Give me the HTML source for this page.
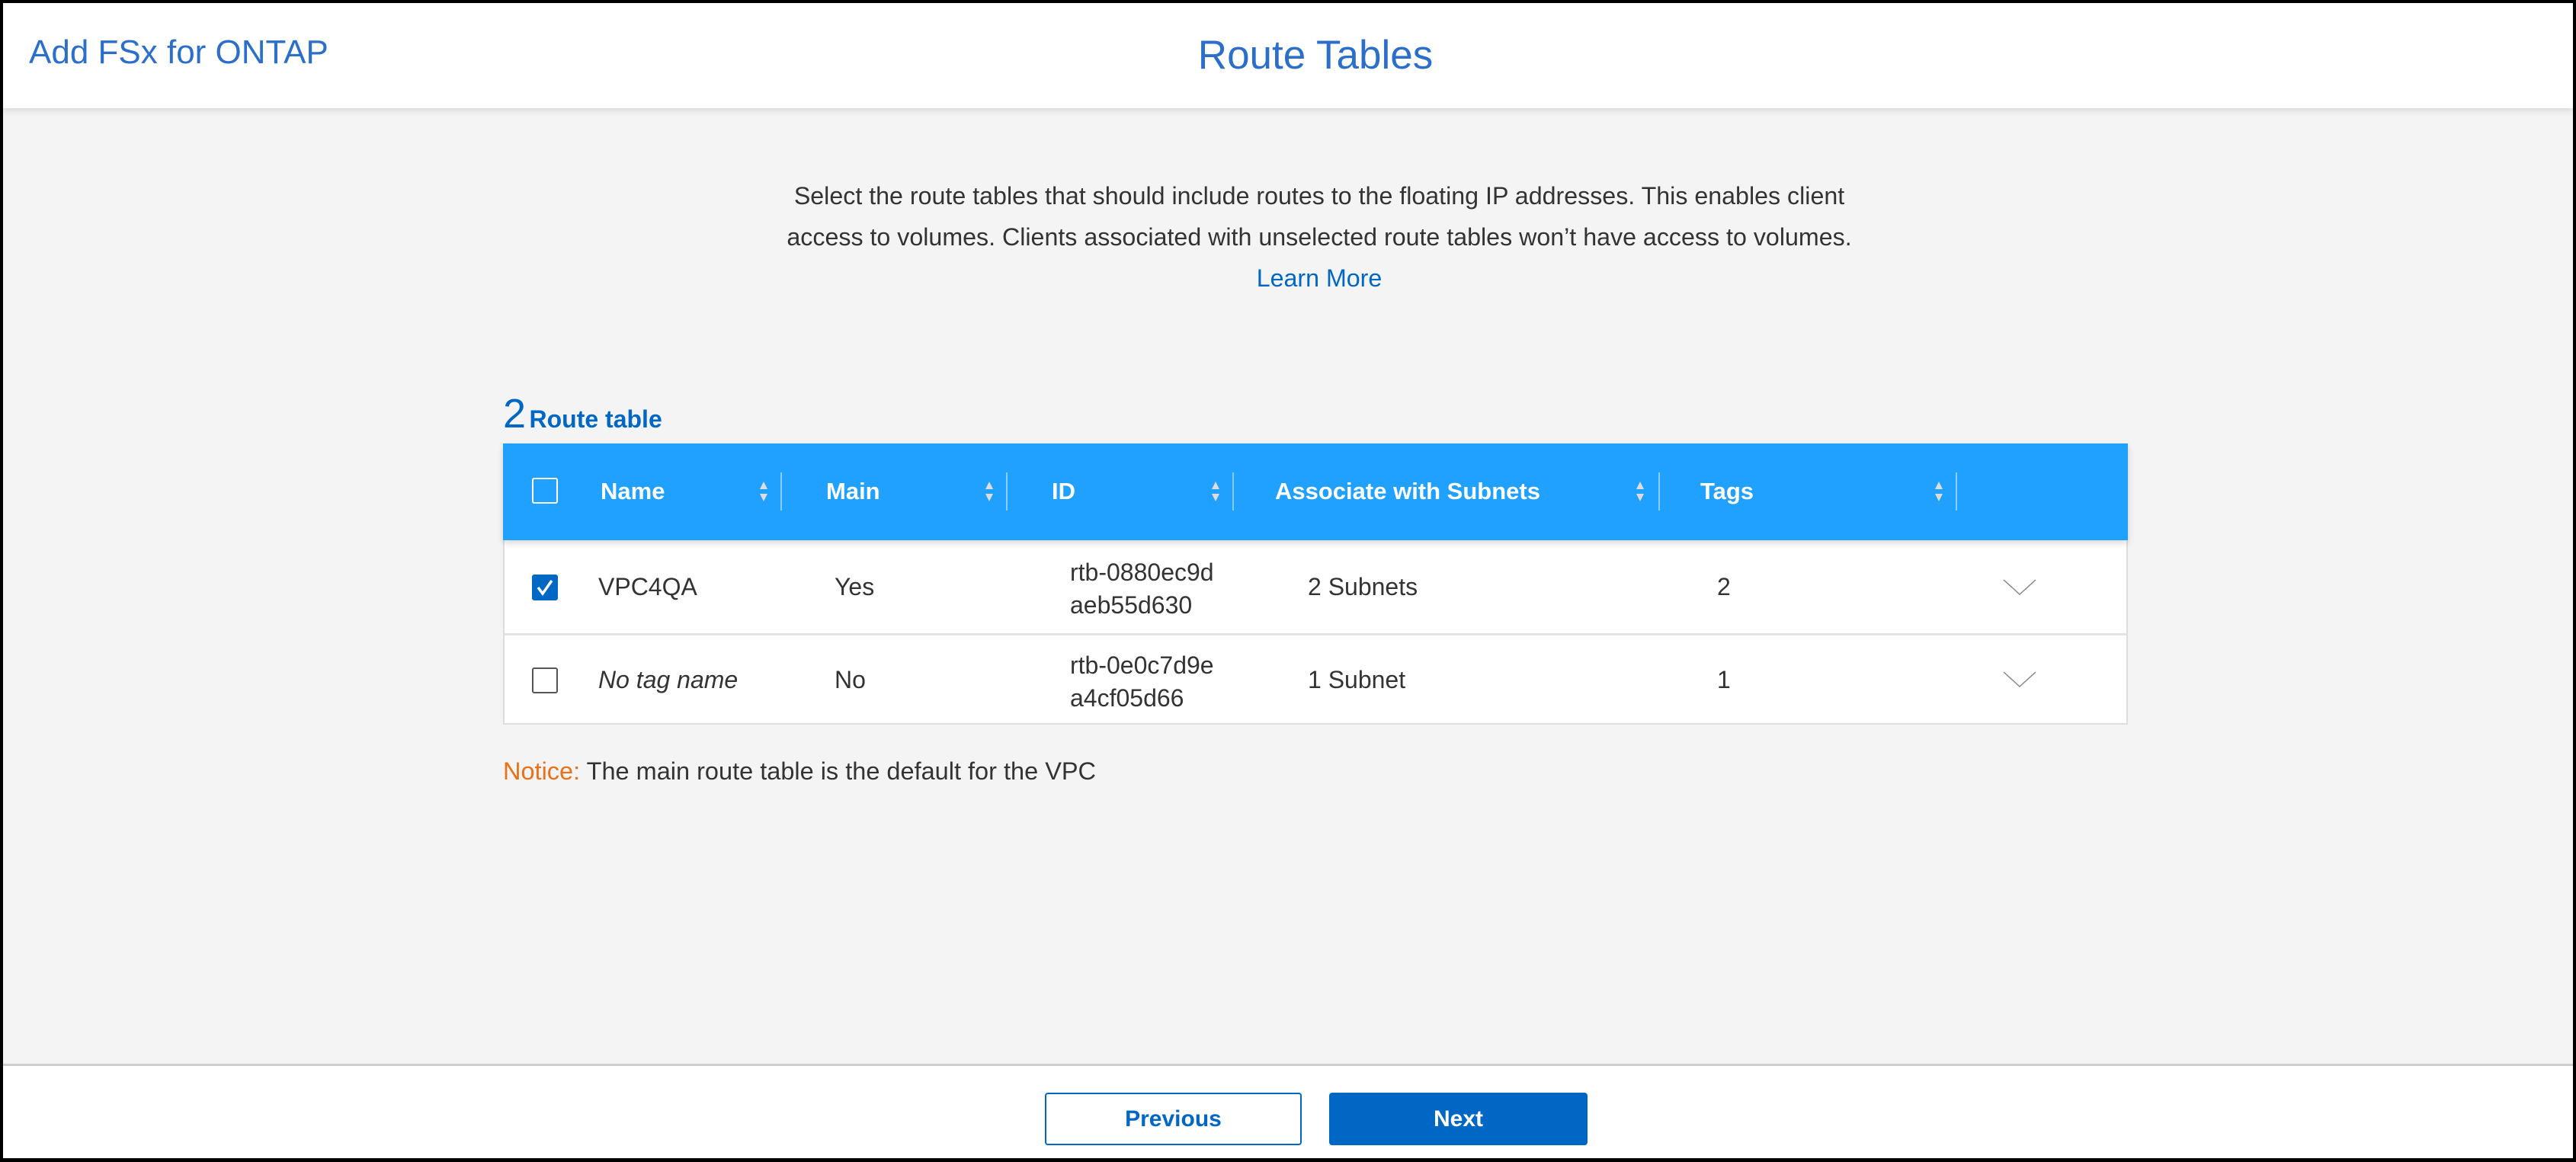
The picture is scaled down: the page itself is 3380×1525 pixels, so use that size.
<!DOCTYPE html>
<html><head><meta charset="utf-8"><style>
*{margin:0;padding:0;box-sizing:border-box}
body{width:3380px;height:1525px;background:#000;font-family:"Liberation Sans",sans-serif;position:relative;overflow:hidden;color:#333}
.frame{position:absolute;left:4px;top:4px;width:3372px;height:1516px;background:#f4f4f4;overflow:hidden}
.hdr{position:absolute;left:0;top:0;width:100%;height:138px;background:#fff;box-shadow:0 3px 8px rgba(0,0,0,.12)}
.abs{position:absolute;white-space:nowrap}
.th{position:absolute;top:0;height:125px;line-height:125px;color:#fff;font-weight:bold;font-size:31px}
.sort{position:absolute;top:48px;width:14px;height:30px}
.div{position:absolute;top:38px;width:2px;height:50px;background:#8ccbff}
.cb{position:absolute;width:34px;height:34px;border:2px solid #555;border-radius:3px;background:#fff}
.cell{position:absolute;font-size:32px;color:#333;white-space:nowrap}
</style></head><body>
<div class="frame">
<div class="hdr">
 <div class="abs" style="left:34px;top:40px;font-size:44px;color:#2c6fcb">Add FSx for ONTAP</div>
 <div class="abs" style="left:36px;width:3372px;text-align:center;top:38px;font-size:53px;color:#2c6fcb">Route Tables</div>
</div>
<div class="abs" style="left:41px;width:3372px;text-align:center;top:226px;font-size:32.2px;line-height:54px;color:#333">Select the route tables that should include routes to the floating IP addresses. This enables client<br>access to volumes. Clients associated with unselected route tables won’t have access to volumes.<br><span style="color:#0067c5">Learn More</span></div>
<div class="abs" style="left:656px;top:508px;color:#0067c5"><span style="font-size:54px">2</span> <span style="font-size:32px;font-weight:bold">Route table</span></div>

<div style="position:absolute;left:656px;top:578px;width:2132px;height:369px;background:#fff;border:2px solid #ddd">
 <div style="position:absolute;left:-2px;top:-2px;width:2132px;height:127px;background:#20a0ff;box-shadow:0 4px 8px rgba(0,0,0,.15)">
  <div class="cb" style="left:38px;top:45px;background:transparent;border-color:#fff"></div>
  <div class="th" style="left:128px">Name</div>
  <div class="th" style="left:424px">Main</div>
  <div class="th" style="left:720px">ID</div>
  <div class="th" style="left:1013px">Associate with Subnets</div>
  <div class="th" style="left:1571px">Tags</div>
  <svg class="sort" style="left:335px" viewBox="0 0 14 30"><path d="M7 2L12 12H2Z M7 28L12 18H2Z" fill="#ddd"/></svg>
  <svg class="sort" style="left:631px" viewBox="0 0 14 30"><path d="M7 2L12 12H2Z M7 28L12 18H2Z" fill="#ddd"/></svg>
  <svg class="sort" style="left:928px" viewBox="0 0 14 30"><path d="M7 2L12 12H2Z M7 28L12 18H2Z" fill="#ddd"/></svg>
  <svg class="sort" style="left:1485px" viewBox="0 0 14 30"><path d="M7 2L12 12H2Z M7 28L12 18H2Z" fill="#ddd"/></svg>
  <svg class="sort" style="left:1877px" viewBox="0 0 14 30"><path d="M7 2L12 12H2Z M7 28L12 18H2Z" fill="#ddd"/></svg>
  <div class="div" style="left:364px"></div>
  <div class="div" style="left:660px"></div>
  <div class="div" style="left:957px"></div>
  <div class="div" style="left:1516px"></div>
  <div class="div" style="left:1906px"></div>
 </div>
 <!-- row1 -->
 <div class="cb" style="left:36px;top:170px;background:#0067c5;border-color:#0067c5"><svg width="30" height="30" viewBox="0 0 30 30" style="position:absolute;left:0;top:0"><path d="M6 15L12 23L24 6" stroke="#fff" stroke-width="3.5" fill="none"/></svg></div>
 <div class="cell" style="left:123px;top:168px">VPC4QA</div>
 <div class="cell" style="left:433px;top:168px">Yes</div>
 <div class="cell" style="left:742px;top:146px;line-height:43px">rtb-0880ec9d<br>aeb55d630</div>
 <div class="cell" style="left:1054px;top:168px">2 Subnets</div>
 <div class="cell" style="left:1591px;top:168px">2</div>
 <svg style="position:absolute;left:1966px;top:176px" width="44" height="22" viewBox="0 0 44 22"><path d="M1 1L22 20L43 1" stroke="#888" stroke-width="1.5" fill="none"/></svg>
 <div style="position:absolute;left:0;top:247px;width:100%;height:3px;background:#e4e4e4"></div>
 <!-- row2 -->
 <div class="cb" style="left:36px;top:292px"></div>
 <div class="cell" style="left:123px;top:290px;font-style:italic">No tag name</div>
 <div class="cell" style="left:433px;top:290px">No</div>
 <div class="cell" style="left:742px;top:268px;line-height:43px">rtb-0e0c7d9e<br>a4cf05d66</div>
 <div class="cell" style="left:1054px;top:290px">1 Subnet</div>
 <div class="cell" style="left:1591px;top:290px">1</div>
 <svg style="position:absolute;left:1966px;top:297px" width="44" height="22" viewBox="0 0 44 22"><path d="M1 1L22 20L43 1" stroke="#888" stroke-width="1.5" fill="none"/></svg>
</div>

<div class="abs" style="left:656px;top:990px;font-size:32.5px;color:#333"><span style="color:#e8711a">Notice:</span> The main route table is the default for the VPC</div>

<div style="position:absolute;left:0;top:1392px;width:100%;height:130px;background:#fff;border-top:3px solid #ccc"></div>
<div style="position:absolute;left:1367px;top:1430px;width:337px;height:69px;border:2px solid #0067c5;border-radius:4px;background:#fff;color:#0067c5;font-weight:bold;font-size:30px;text-align:center;line-height:65px">Previous</div>
<div style="position:absolute;left:1740px;top:1430px;width:339px;height:69px;border-radius:4px;background:#0067c5;color:#fff;font-weight:bold;font-size:30px;text-align:center;line-height:69px">Next</div>
</div>
</body></html>
